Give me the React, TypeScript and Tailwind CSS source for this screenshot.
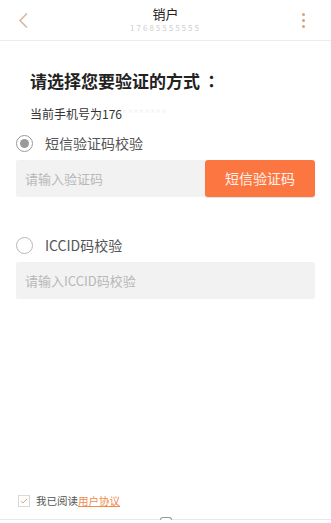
const font = { fontFamily: '"Noto Sans CJK SC", "Noto Sans", sans-serif' }

function Radio({ checked }: { checked?: boolean }) {
  return (
    <span
      className={`w-[17px] h-[17px] rounded-full border flex items-center justify-center shrink-0 ${
        checked ? 'border-[#9a9a9a]' : 'border-[#b8b8b8]'
      }`}
    >
      {checked && <span className="w-[9px] h-[9px] rounded-full bg-[#9a9a9a]" />}
    </span>
  )
}

export default function App() {
  return (
    <div style={font} className="w-[331px] h-[523px] bg-white flex flex-col overflow-hidden">
      {/* header */}
      <header className="h-[41px] shrink-0 flex items-center justify-between px-[16px] border-b border-[#ececec]">
        <svg width="12" height="17" viewBox="0 0 12 17" className="ml-[1px]">
          <path d="M10 1.5 L3 8.5 L10 15.5" fill="none" stroke="#d9b79e" strokeWidth="1.6" />
        </svg>
        <div className="flex flex-col items-center -mt-[2px]">
          <span className="text-[13px] leading-[14px] text-[#222]">销户</span>
          <span className="text-[8px] leading-[9px] text-[#cfcfcf] tracking-[2px] mt-[2px]">17685555555</span>
        </div>
        <div className="flex flex-col items-center gap-[3px] mr-[10px]">
          <span className="w-[3px] h-[3px] rounded-full bg-[#d7a27c]" />
          <span className="w-[3px] h-[3px] rounded-full bg-[#d7a27c]" />
          <span className="w-[3px] h-[3px] rounded-full bg-[#d7a27c]" />
        </div>
      </header>

      <div className="px-[30px] pt-[28px]">
        <h1 className="text-[17px] font-bold text-[#222] leading-[24px]">
          请选择您要验证的方式<span className="ml-[3px]" style={{ fontFamily: '"Noto Sans CJK TC", sans-serif' }}>：</span>
        </h1>
        <p className="text-[12px] text-[#333] mt-[13px] leading-[16px]">
          当前手机号为176<span className="text-[#f4f4f4]">********</span>
        </p>
      </div>

      <div className="px-[16px]">
        <label className="flex items-center gap-[12px] mt-[9px] h-[24px]">
          <Radio checked />
          <span className="text-[14px] text-[#555]">短信验证码校验</span>
        </label>
        <div className="flex mt-[5px] h-[37px]">
          <div className="flex-1 bg-[#f2f2f2] rounded-l-[2px] flex items-center pl-[9px] text-[13px] text-[#b8b8b8]">
            请输入验证码
          </div>
          <button className="w-[110px] bg-[#fb7640] rounded-[3px] text-white/90 text-[14px] shadow-[0_1px_1px_rgba(0,0,0,0.12)]">
            短信验证码
          </button>
        </div>

        <label className="flex items-center gap-[12px] mt-[36px] h-[24px]">
          <Radio />
          <span className="text-[14px] text-[#555]">ICCID码校验</span>
        </label>
        <div className="mt-[5px] h-[37px] bg-[#f2f2f2] rounded-[2px] flex items-center pl-[9px] text-[13px] text-[#b8b8b8]">
          请输入ICCID码校验
        </div>
      </div>

      <div className="mt-auto px-[18px] pb-[12px] flex items-center gap-[6px]">
        <span className="w-[12px] h-[12px] border border-[#d8d8d8] flex items-center justify-center">
          <svg width="8" height="6" viewBox="0 0 8 6">
            <path d="M0.8 3 L3 5 L7.2 0.8" fill="none" stroke="#e4a27c" strokeWidth="1" />
          </svg>
        </span>
        <span className="text-[10.5px] text-[#555] leading-none">
          我已阅读<span className="text-[#f08a4b] underline">用户协议</span>
        </span>
      </div>
      <div className="h-[4px] border-t border-[#e8e8e8] shrink-0 flex justify-center">
        <span className="w-[12px] h-[3px] border-t border-x border-[#999] rounded-t-full -mt-[3px] bg-white" />
      </div>
    </div>
  )
}
